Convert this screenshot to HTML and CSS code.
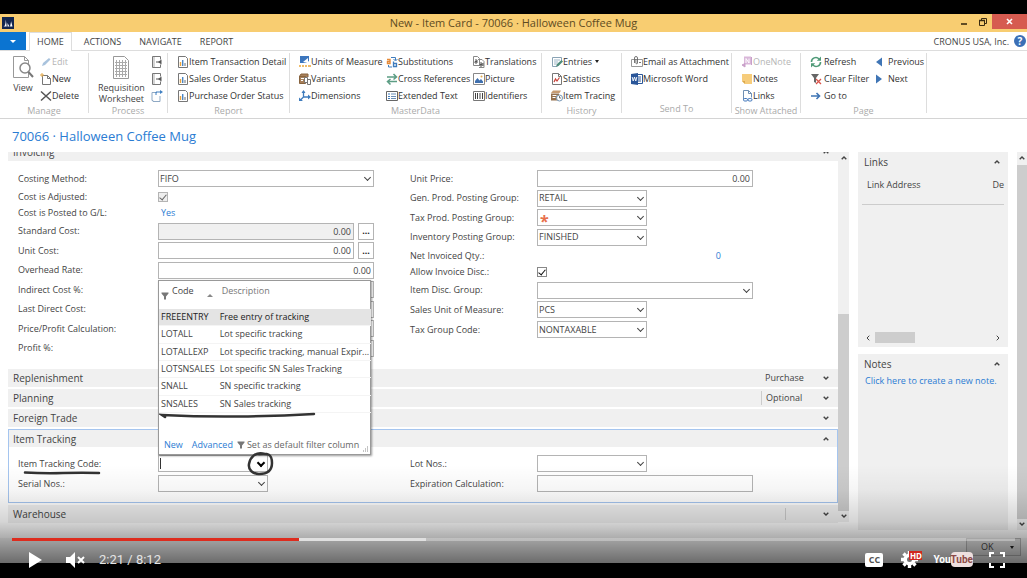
FILE: index.html
```html
<!DOCTYPE html>
<html lang="en">
<head>
  <meta charset="utf-8">
  <title>New - Item Card - 70066 · Halloween Coffee Mug</title>
  <link rel="stylesheet" href="styles.css">
</head>
<body>
  <svg class="sprite" aria-hidden="true">
    <symbol id="i-report" viewBox="0 0 12 12"><path d="M1.5.5h7l2 2v9h-9z" fill="#fff" stroke="#777"/><path d="M3.5 10V6" stroke="#e8a33d" stroke-width="1.4"/><path d="M5.7 10V4" stroke="#4a86c5" stroke-width="1.4"/><path d="M8 10V7" stroke="#999" stroke-width="1.4"/></symbol>
    <symbol id="i-door" viewBox="0 0 12 12"><path d="M9.500 3.500V.5h-8v11h8v-3" fill="#fff" stroke="#777"/><path d="M3 1v10" stroke="#aaa"/><path d="M10.500 3.500v5L7 6z" fill="#555"/><path d="M5 6h4" stroke="#555"/></symbol>
    <symbol id="i-up" viewBox="0 0 6 4"><path d="M.7 3.300L3 1l2.300 2.300" fill="none" stroke="#444" stroke-width="1.400"/></symbol>
    <symbol id="i-down" viewBox="0 0 6 4"><path d="M.7.7L3 3l2.300-2.300" fill="none" stroke="#444" stroke-width="1.400"/></symbol>
    <symbol id="i-funnel" viewBox="0 0 8 8"><path d="M.5.5h7v1L5 4.500v3H3v-3L.5 1.500z" fill="#777"/></symbol>
  </svg>

  <div class="app">
    <header class="titlebar">
      <svg class="app-logo" viewBox="0 0 12 12"><path d="M0 0h12v12H0z" fill="#12264f"/><path d="M1.500 9.500c1.500-.3 2-2 2.300-7l.9 7zM5.500 9.500V6l2 3.500zM8 9.500V5l1 4.500V4l1.500 5.500z" fill="#fff"/></svg>
      <span class="window-title">New - Item Card - 70066 · Halloween Coffee Mug</span>
      <div class="window-buttons">
        <button class="win-btn" aria-label="Minimize"><svg width="8" height="8" viewBox="0 0 8 8"><path d="M1 6h6" stroke="#3a2b10" stroke-width="1.600"/></svg></button>
        <button class="win-btn" aria-label="Restore"><svg width="8" height="8" viewBox="0 0 8 8"><path d="M.5 2.500h5v5h-5zM2.500 2V.5h5v5H6" fill="none" stroke="#3a2b10"/><path d="M0 2.500h6" stroke="#3a2b10" stroke-width="1.500"/></svg></button>
        <button class="win-btn win-close" aria-label="Close"><svg width="7" height="7" viewBox="0 0 7 7"><path d="M1 1l5 5M6 1L1 6" stroke="#fff" stroke-width="1.600"/></svg></button>
      </div>
    </header>

    <nav class="tabs">
      <button class="file-tab" aria-label="Application menu"></button>
      <button class="tab active">HOME</button>
      <button class="tab">ACTIONS</button>
      <button class="tab">NAVIGATE</button>
      <button class="tab">REPORT</button>
      <span class="company">CRONUS USA, Inc.</span>
      <button class="help" aria-label="Help">?</button>
    </nav>

    <div class="ribbon">
      <section class="group group-manage">
        <div class="group-body">
          <button class="big-btn">
            <svg width="22" height="24" viewBox="0 0 22 24"><path d="M1.500.5h11l4 4v17h-15z" fill="#fff" stroke="#999"/><path d="M12.500.5v4h4" fill="none" stroke="#999"/><circle cx="13" cy="12" r="5" fill="#fff" stroke="#888" stroke-width="1.500"/><path d="M16.500 16l4.500 5" stroke="#777" stroke-width="2"/></svg>
            View
          </button>
          <div class="stack">
            <button class="cmd muted"><svg viewBox="0 0 12 12"><path d="M2 10l1-3 6-5 1.500 1.500L5 9z" fill="#a9c3dd"/></svg>Edit</button>
            <button class="cmd"><svg viewBox="0 0 12 12"><path d="M2.500 2.500h5l3 3v6h-8z" fill="#fff" stroke="#777"/><path d="M7.500 2.500v3h3" fill="none" stroke="#777"/><path d="M0 2h4M2 0v4" stroke="#e3a94b"/></svg>New</button>
            <button class="cmd"><svg viewBox="0 0 12 12"><path d="M1 1.500l10 9M11 1.500l-10 9" stroke="#555" stroke-width="1.500"/></svg>Delete</button>
          </div>
        </div>
        <h3>Manage</h3>
      </section>

      <section class="group group-process">
        <div class="group-body">
          <button class="big-btn">
            <svg width="18" height="24" viewBox="0 0 18 24"><path d="M1.500.5h11l4 4v18h-15z" fill="#fff" stroke="#999"/><path d="M3 6.500h12M3 9.500h12M3 12.500h12M3 15.500h12M3 18.500h12M4.500 4v17M7.500 4v17M10.500 4v17M13.500 4v17" stroke="#aaa"/></svg>
            Requisition<br>Worksheet
          </button>
          <div class="stack">
            <button class="cmd" aria-label="Return orders"><svg><use href="#i-door"/></svg></button>
            <button class="cmd" aria-label="Copy item"><svg><use href="#i-door"/></svg></button>
            <button class="cmd" aria-label="Create item"><svg viewBox="0 0 12 12"><path d="M6 2.500H1v8h1v1h7V6" fill="#fff" stroke="#8fa9c4"/><path d="M5 5V2h5" fill="none" stroke="#3f7fc1"/><path d="M9 0l3 2-3 2z" fill="#3f7fc1"/></svg></button>
          </div>
        </div>
        <h3>Process</h3>
      </section>

      <section class="group group-report">
        <div class="group-body">
          <div class="stack">
            <button class="cmd"><svg><use href="#i-report"/></svg>Item Transaction Detail</button>
            <button class="cmd"><svg><use href="#i-report"/></svg>Sales Order Status</button>
            <button class="cmd"><svg><use href="#i-report"/></svg>Purchase Order Status</button>
          </div>
        </div>
        <h3>Report</h3>
      </section>

      <section class="group group-master">
        <div class="group-body">
          <div class="stack">
            <button class="cmd"><svg viewBox="0 0 12 12"><path d="M1 0h9v5L7 7H1z" fill="#3c76bd"/><path d="M4 6l5-4v5z" fill="#fff"/><path d="M0 9h12v2H0z" fill="#f0bd6a"/><path d="M2.500 9v2M5.500 9v2M8.500 9v2" stroke="#fff"/></svg>Units of Measure</button>
            <button class="cmd"><svg viewBox="0 0 12 12"><path d="M0 4l2-3h7v3M.5 3.500h6v7h-6z" fill="#a8805a" stroke="#86633f"/><path d="M2 5.500h3M2 7.500h2" stroke="#fff"/><path d="M5.500 4.500h3v5h-3zM8.500 6.500h3v5h-3z" fill="#fff" stroke="#777"/></svg>Variants</button>
            <button class="cmd"><svg viewBox="0 0 12 12"><path d="M4.500 1v6l-3 3M4.500 7h6" fill="none" stroke="#3f7cbd" stroke-width="1.300"/><path d="M2.500 3l2-3 2 3zM9 4.500l3 2.500-3 2.500zM0 7.500V11h4z" fill="#3f7cbd"/></svg>Dimensions</button>
          </div>
          <div class="stack">
            <button class="cmd"><svg viewBox="0 0 12 12"><path d="M1 3.500h3v4H1.500V5.500H4" fill="none" stroke="#e58b3a" stroke-width="1.400"/><path d="M7.500 5.500v5h3v-3h-3" fill="none" stroke="#3f7cbd" stroke-width="1.300"/><path d="M5 1.500h4.500V4M7.500 3l2 2 2-2M2.500 9v2H6" fill="none" stroke="#3f7cbd"/></svg>Substitutions</button>
            <button class="cmd"><svg viewBox="0 0 12 12"><path d="M1 4h9M7.500 1l3 3-3 2.500M11 8.500H2M4.500 6l-3 2.500 3 3" fill="none" stroke="#5c9d84" stroke-width="1.500"/></svg>Cross References</button>
            <button class="cmd"><svg viewBox="0 0 12 12"><path d="M.5 1.500h11v9H.5z" fill="#fff" stroke="#666"/><path d="M2 4h2M2 6.500h2M2 8.500h2" stroke="#3f7cbd"/><path d="M5 4h5M5 6.500h5M5 8.500h5" stroke="#6b8fb7"/></svg>Extended Text</button>
          </div>
          <div class="stack">
            <button class="cmd"><svg viewBox="0 0 12 12"><path d="M.5.5h4l2 2v7h-6zM5 3.500h4l2 2v6H6" fill="#fff" stroke="#888"/><path d="M2 4h2v3H2V5.500h2M7 7h2v3H7V8.500h2M10 7v3" fill="none" stroke="#555"/></svg>Translations</button>
            <button class="cmd"><svg viewBox="0 0 12 12"><path d="M.5.5h11v11H.5z" fill="#fff" stroke="#888"/><path d="M2 10V8l2.500-3 2 2.500L8 6l2 2.500V10z" fill="#3e6fae"/><circle cx="8.500" cy="3.500" r="1" fill="#e3a94b"/></svg>Picture</button>
            <button class="cmd"><svg viewBox="0 0 12 12"><path d="M.5 1.500h11v9H.5z" fill="#fff" stroke="#777"/><path d="M2.500 3v6M4.500 3v6M7 3v6M9.500 3v6" stroke="#444"/></svg>Identifiers</button>
          </div>
        </div>
        <h3>MasterData</h3>
      </section>

      <section class="group group-history">
        <div class="group-body">
          <div class="stack">
            <button class="cmd"><svg viewBox="0 0 12 12"><path d="M1.500 1.500h9v4M1.500 1.500v9h5" fill="none" stroke="#8aa3b5"/><path d="M3 4h6M3 6h4M3 8h3" stroke="#9fb7c8"/><path d="M5 10.500l1-2.500 4.500-4L12 5.500 7.500 10z" fill="#4f8c7c"/></svg>Entries <span class="caret-down"></span></button>
            <button class="cmd"><svg viewBox="0 0 12 12"><path d="M1.500.5h6l3 3v8h-9z" fill="#fff" stroke="#777"/><path d="M7.500.5v3h3" fill="none" stroke="#777"/><path d="M3 9l1.500-3L6 8l2.500-3.500" fill="none" stroke="#c8433a" stroke-width="1.200"/></svg>Statistics</button>
            <button class="cmd"><svg viewBox="0 0 12 12"><path d="M0 3l2-2.500h8L8.500 3z" fill="#c69b72"/><path d="M0 3.500h8v7H0z" fill="#94704e"/><path d="M1.500 5.500h4M1.500 7.500h3" stroke="#fff"/><circle cx="8.500" cy="8" r="3" fill="#fff" stroke="#7797b5"/><path d="M8.500 6v2h1.500" fill="none" stroke="#555" stroke-width=".8"/></svg>Item Tracing</button>
          </div>
        </div>
        <h3>History</h3>
      </section>

      <section class="group group-send">
        <div class="group-body">
          <div class="stack">
            <button class="cmd"><svg viewBox="0 0 12 12"><path d="M.5 3.500h11v7H.5z" fill="#fff" stroke="#999"/><path d="M3.500 7V2a1.500 1.500 0 013 0v5a.8.8 0 01-1.600 0V3M8 6.500h2" fill="none" stroke="#666" stroke-width=".9"/></svg>Email as Attachment</button>
            <button class="cmd"><svg viewBox="0 0 12 12"><path d="M6.500 1.500h5v9h-5z" fill="#fff" stroke="#2a5699"/><path d="M7 4h3M7 6h3M7 8h3" stroke="#2a5699"/><path d="M0 1l7-1v12l-7-1z" fill="#2a5699"/><path d="M1.200 4l1 4 1.300-4 1.300 4 1-4" fill="none" stroke="#fff" stroke-width=".9"/></svg>Microsoft Word</button>
          </div>
        </div>
        <h3>Send To</h3>
      </section>

      <section class="group group-attached">
        <div class="group-body">
          <div class="stack">
            <button class="cmd muted"><svg viewBox="0 0 12 12"><path d="M3 .5h7v8H3z" fill="#d9b7d9"/><path d="M5 7V2.500L8 7V2.500" fill="none" stroke="#fff"/><path d="M10.500 1v8M1 9l3-1.500V11z" stroke="#c9a0c9" fill="#c9a0c9"/></svg>OneNote</button>
            <button class="cmd"><svg viewBox="0 0 12 12"><path d="M1 1h10v10H4L1 8z" fill="#f6cc7b"/><path d="M1 8h3v3z" fill="#dca94c"/></svg>Notes</button>
            <button class="cmd"><svg viewBox="0 0 12 12"><path d="M2.500 9.500v-9h5l3 3v4" fill="#fff" stroke="#6f8fb3"/><path d="M7.500.5v3h3" fill="none" stroke="#6f8fb3"/><rect x="2.500" y="8.500" width="4" height="2.500" rx="1.200" fill="none" stroke="#3e74ba"/><rect x="7" y="8.500" width="4" height="2.500" rx="1.200" fill="none" stroke="#3e74ba"/></svg>Links</button>
          </div>
        </div>
        <h3>Show Attached</h3>
      </section>

      <section class="group group-page">
        <div class="group-body">
          <div class="stack">
            <button class="cmd"><svg viewBox="0 0 12 12"><path d="M1.500 6A4.300 4.300 0 019 3M10.500 6A4.300 4.300 0 013 9" fill="none" stroke="#4f9a78" stroke-width="1.600"/><path d="M11 .5v4.200H6.800zM1 11.500V7.300h4.200z" fill="#4f9a78"/></svg>Refresh</button>
            <button class="cmd"><svg viewBox="0 0 12 12"><path d="M1 1h8L6 5v5L4 9V5z" fill="#666"/><path d="M6 6l5 5M11 6l-5 5" stroke="#d9534a" stroke-width="1.300"/></svg>Clear Filter</button>
            <button class="cmd"><svg viewBox="0 0 12 12"><path d="M1 6h8M6.500 3l3 3-3 3" fill="none" stroke="#3f75b5" stroke-width="1.600"/></svg>Go to</button>
          </div>
          <div class="stack">
            <button class="cmd"><svg viewBox="0 0 12 12"><path d="M8 1.500v9L2 6z" fill="#3f75b5"/></svg>Previous</button>
            <button class="cmd"><svg viewBox="0 0 12 12"><path d="M2 1.500v9L8 6z" fill="#3f75b5"/></svg>Next</button>
          </div>
        </div>
        <h3>Page</h3>
      </section>
    </div>

    <h1>70066 · Halloween Coffee Mug</h1>

    <main class="workspace">
      <div class="card">
        <section class="fasttab first">
          <button class="fasttab-head">Invoicing<svg class="chevron"><use href="#i-up"/></svg></button>
          <div class="fields invoicing">
            <div class="column column-left">
              <div class="row"><label for="costing">Costing Method:</label><div class="picker wide"><select id="costing"><option>FIFO</option></select></div></div>
              <div class="row plain"><label for="adjusted">Cost is Adjusted:</label><input type="checkbox" id="adjusted" checked disabled></div>
              <div class="row plain"><span class="label">Cost is Posted to G/L:</span><a href="#" class="value-link">Yes</a></div>
              <div class="row"><label for="standard">Standard Cost:</label><div class="assist"><input type="text" id="standard" class="number" value="0.00" readonly><button class="dots">...</button></div></div>
              <div class="row"><label for="unitcost">Unit Cost:</label><div class="assist"><input type="text" id="unitcost" class="number" value="0.00"><button class="dots">...</button></div></div>
              <div class="row"><label for="overhead">Overhead Rate:</label><input type="text" id="overhead" class="number wide" value="0.00"></div>
              <div class="row"><label for="indirect">Indirect Cost %:</label><input type="text" id="indirect" class="wide"></div>
              <div class="row"><label for="lastdirect">Last Direct Cost:</label><input type="text" id="lastdirect" class="wide"></div>
              <div class="row"><label for="profitcalc">Price/Profit Calculation:</label><input type="text" id="profitcalc" class="wide"></div>
              <div class="row"><label for="profit">Profit %:</label><input type="text" id="profit" class="wide"></div>
            </div>
            <div class="column column-right">
              <div class="row"><label for="price">Unit Price:</label><input type="text" id="price" class="number wide" value="0.00"></div>
              <div class="row"><label for="gen">Gen. Prod. Posting Group:</label><div class="picker"><select id="gen"><option>RETAIL</option></select></div></div>
              <div class="row"><label for="tax">Tax Prod. Posting Group:</label><div class="picker required"><select id="tax"><option></option></select></div></div>
              <div class="row"><label for="inv">Inventory Posting Group:</label><div class="picker"><select id="inv"><option>FINISHED</option></select></div></div>
              <div class="row plain"><span class="label">Net Invoiced Qty.:</span><a href="#" class="value-link qty">0</a></div>
              <div class="row plain"><label for="allow">Allow Invoice Disc.:</label><input type="checkbox" id="allow" checked></div>
              <div class="row"><label for="disc">Item Disc. Group:</label><div class="picker wide"><select id="disc"><option></option></select></div></div>
              <div class="row"><label for="uom">Sales Unit of Measure:</label><div class="picker"><select id="uom"><option>PCS</option></select></div></div>
              <div class="row"><label for="taxgroup">Tax Group Code:</label><div class="picker"><select id="taxgroup"><option>NONTAXABLE</option></select></div></div>
            </div>
          </div>
        </section>

        <button class="fasttab-head">Replenishment<span class="summary">Purchase</span><svg class="chevron"><use href="#i-down"/></svg></button>
        <button class="fasttab-head">Planning<span class="summary divided">Optional</span><svg class="chevron"><use href="#i-down"/></svg></button>
        <button class="fasttab-head">Foreign Trade<svg class="chevron"><use href="#i-down"/></svg></button>

        <section class="fasttab current">
          <button class="fasttab-head">Item Tracking<svg class="chevron"><use href="#i-up"/></svg></button>
          <div class="fields tracking">
            <div class="column">
              <div class="row">
                <label for="trackcode">Item Tracking Code:</label>
                <svg class="ink ink-label" viewBox="0 0 78 6"><path d="M2 3.500q18 1 38 .5T76 4" /></svg>
                <div class="picker open">
                  <input type="text" id="trackcode">
                  <span class="text-caret"></span>
                  <svg class="ink ink-circle" viewBox="0 0 30 28"><path d="M19 4C9 1 4 8 3 14s4 10 10 10 13-2 13-11S22 3 13 4" /></svg>
                  <div class="lookup">
                    <table>
                      <thead>
                        <tr>
                          <th><svg class="funnel"><use href="#i-funnel"/></svg>Code<span class="sort"></span></th>
                          <th class="light">Description</th>
                        </tr>
                      </thead>
                      <tbody>
                        <tr class="selected"><td>FREEENTRY</td><td>Free entry of tracking</td></tr>
                        <tr><td>LOTALL</td><td>Lot specific tracking</td></tr>
                        <tr><td>LOTALLEXP</td><td>Lot specific tracking, manual Expir...</td></tr>
                        <tr><td>LOTSNSALES</td><td>Lot specific SN Sales Tracking</td></tr>
                        <tr><td>SNALL</td><td>SN specific tracking</td></tr>
                        <tr><td>SNSALES</td><td>SN Sales tracking</td></tr>
                      </tbody>
                    </table>
                    <svg class="ink ink-row" viewBox="0 0 158 8"><path d="M6 6L3 4q40 2 78 1.500T155 3" /></svg>
                    <footer>
                      <a href="#">New</a>
                      <a href="#">Advanced</a>
                      <button class="default-filter"><svg class="funnel"><use href="#i-funnel"/></svg>Set as default filter column</button>
                      <svg class="grip" viewBox="0 0 7 7"><path d="M5 1h1M3 3h1M5 3h1M1 5h1M3 5h1M5 5h1" stroke="#888"/></svg>
                    </footer>
                  </div>
                </div>
              </div>
              <div class="row"><label for="serial">Serial Nos.:</label><div class="picker"><select id="serial"><option></option></select></div></div>
            </div>
            <div class="column column-right">
              <div class="row"><label for="lot">Lot Nos.:</label><div class="picker"><select id="lot"><option></option></select></div></div>
              <div class="row"><label for="expiration">Expiration Calculation:</label><input type="text" id="expiration" class="wide"></div>
            </div>
          </div>
        </section>

        <button class="fasttab-head">Warehouse<span class="summary divided empty"></span><svg class="chevron"><use href="#i-down"/></svg></button>
      </div>

      <div class="scrollbar card-scroll">
        <svg><use href="#i-up"/></svg>
        <div class="track"><div class="thumb"></div></div>
        <svg><use href="#i-down"/></svg>
      </div>

      <aside class="factbox">
        <section class="links-box">
          <h2>Links<svg class="chevron"><use href="#i-up"/></svg></h2>
          <div class="links-head"><span>Link Address</span><span>De</span></div>
          <div class="hscroll">
            <svg viewBox="0 0 4 6"><path d="M3.300.7L1 3l2.300 2.300" /></svg>
            <div class="hthumb"></div>
            <svg viewBox="0 0 4 6"><path d="M.7.7L3 3 .7 5.300" /></svg>
          </div>
        </section>
        <section class="notes-box">
          <h2>Notes<svg class="chevron"><use href="#i-up"/></svg></h2>
          <a href="#">Click here to create a new note.</a>
        </section>
      </aside>

      <div class="scrollbar page-scroll">
        <svg><use href="#i-up"/></svg>
        <div class="track"><div class="thumb"></div></div>
        <svg><use href="#i-down"/></svg>
      </div>
    </main>

    <div class="actionbar">
      <button class="ok">OK<span class="caret-down"></span></button>
    </div>
  </div>

  <div class="player">
    <input type="range" class="seek" aria-label="Seek" min="0" max="492" value="141">
    <div class="controls">
      <button class="play" aria-label="Play"><svg width="13" height="16" viewBox="0 0 13 16"><path d="M0 0l13 8-13 8z" fill="#fff"/></svg></button>
      <button class="mute" aria-label="Unmute"><svg width="19" height="16" viewBox="0 0 19 16"><path d="M0 5h4l5-5v16l-5-5H0z" fill="#fff"/><path d="M12 5l6 6M18 5l-6 6" stroke="#fff" stroke-width="2"/></svg></button>
      <span class="time">2:21 / 8:12</span>
      <button class="cc" aria-label="Captions">CC</button>
      <button class="settings" aria-label="Settings">
        <svg width="17" height="17" viewBox="0 0 17 17"><circle cx="8.500" cy="8.500" r="4.300" fill="none" stroke="#fff" stroke-width="3.600"/><path d="M8.500 0v3M8.500 14v3M0 8.500h3M14 8.500h3M2.500 2.500l2 2M12.500 12.500l2 2M2.500 14.500l2-2M12.500 4.500l2-2" stroke="#fff" stroke-width="3.400"/></svg>
        <span class="hd">HD</span>
      </button>
      <a href="#" class="youtube">You<span>Tube</span></a>
      <button class="fullscreen" aria-label="Full screen"><svg width="16" height="16" viewBox="0 0 16 16"><path d="M1 5V1h4M11 1h4v4M15 11v4h-4M5 15H1v-4" fill="none" stroke="#fff" stroke-width="2"/></svg></button>
    </div>
  </div>
</body>
</html>
```
FILE: styles.css
```css
:root {
  --blue: #2b7cd3;
  --text: #444;
  --muted: #aaa;
  --panel: #f0f0f0;
  --thumb: #cdcdcd;
  --border: #b4b4b4;
}

* {
  box-sizing: border-box;
}

body {
  position: relative;
  display: flex;
  flex-direction: column;
  min-height: 100vh;
  margin: 0;
  padding: 14px 0 15px;
  background: #000;
  color: var(--text);
  font: 9px/14px "Open Sans", "Noto Sans", sans-serif;
}

button, input, select {
  margin: 0;
  padding: 0;
  border: none;
  border-radius: 0;
  background: none;
  color: inherit;
  font: inherit;
}

a {
  color: var(--blue);
  text-decoration: none;
}

h1, h2, h3 {
  margin: 0;
  font-weight: 400;
}

svg {
  display: block;
  flex: none;
}

.sprite {
  position: absolute;
  width: 0;
  height: 0;
}

.app {
  display: flex;
  flex: 1;
  flex-direction: column;
  background: #fff;
}

/* Title bar */
.titlebar {
  display: flex;
  align-items: center;
  height: 18px;
  padding-left: 2px;
  background: #f8cd71;
}

.app-logo {
  width: 12px;
  height: 12px;
}

.window-title {
  flex: 1;
  padding-left: 59px;
  color: #5e4b22;
  font-size: 11px;
  text-align: center;
}

.window-buttons {
  display: flex;
  align-self: flex-start;
}

.win-btn {
  display: flex;
  align-items: center;
  justify-content: center;
  width: 19px;
  height: 15px;
}

.win-close {
  width: 35px;
  background: #d65b50;
}

/* Ribbon tabs */
.tabs {
  display: flex;
  height: 19px;
  border-bottom: 1px solid #ddd;
}

.file-tab {
  width: 26px;
  background: #0b74d1;
}

.file-tab::after,
.caret-down {
  display: inline-block;
  border: 3px solid transparent;
  border-top-color: #fff;
  border-bottom: none;
  content: "";
  vertical-align: middle;
}

.caret-down {
  margin-left: 3px;
  border-width: 2px;
  border-top: 3px solid #222;
}

.tab {
  height: 19px;
  padding: 0 9px;
}

.tab.active {
  margin: 0 3px;
  padding: 0 7px;
  border: 1px solid #ddd;
  border-bottom: none;
  background: #fff;
}

.company {
  margin: 3px 5px 0 auto;
}

.help {
  width: 12px;
  height: 12px;
  margin: 3px 1px 0 0;
  border-radius: 50%;
  background: #3b6fb6;
  color: #fff;
  font-size: 10px;
  font-weight: 700;
  line-height: 12px;
}

/* Ribbon */
.ribbon {
  display: flex;
  height: 68px;
  padding-top: 2px;
  border-bottom: 1px solid #d4d4d4;
}

.group {
  display: flex;
  flex: none;
  flex-direction: column;
  margin-bottom: 5px;
  border-right: 1px solid #ddd;
}

.group-body {
  display: flex;
  flex: 1;
}

.group h3 {
  height: 11px;
  color: var(--muted);
  font-size: 9px;
  line-height: 14px;
  text-align: center;
  white-space: nowrap;
}

.group-manage { width: 89px; }
.group-process { width: 79px; }
.group-report { width: 122px; }
.group-master { width: 252px; }
.group-history { width: 80px; }
.group-send { width: 110px; }
.group-attached { width: 69px; }
.group-page { width: 126px; }

.group-body {
  padding-left: 9px;
}

.group-manage .group-body {
  padding-left: 12px;
}

.stack {
  flex: none;
}

.group-master .stack {
  width: 87px;
}

.group-page .stack {
  width: 64px;
}

.big-btn {
  display: flex;
  flex-direction: column;
  align-items: center;
  padding-top: 3px;
  line-height: 11px;
}

.big-btn svg {
  margin-bottom: 2px;
}

.group-manage .stack,
.group-process .stack {
  margin-left: 6px;
}

.cmd {
  display: flex;
  align-items: center;
  height: 17px;
  color: #333;
  white-space: nowrap;
}

.cmd svg {
  width: 12px;
  height: 12px;
}

.group-page .cmd svg {
  margin-right: 2px;
}

.cmd.muted {
  color: #b5b5b5;
}

h1 {
  height: 33px;
  padding-left: 12px;
  color: var(--blue);
  font-size: 13px;
  line-height: 34px;
}

/* Workspace */
.workspace {
  display: flex;
  flex: 1;
  padding: 0 0 8px 8px;
}

.card {
  flex: 1;
  overflow: hidden;
}

.fasttab-head {
  display: flex;
  align-items: center;
  width: 100%;
  height: 18px;
  margin-bottom: 2px;
  padding: 0 9px 0 5px;
  background: var(--panel);
  font-size: 10px;
}

.first .fasttab-head {
  margin-top: -9px;
}

.chevron {
  width: 6px;
  height: 4px;
  margin-left: auto;
}

.summary {
  width: 48px;
  margin-left: auto;
  padding-left: 4px;
  font-size: 9px;
  text-align: left;
}

.summary + .chevron {
  margin-left: 14px;
}

.divided {
  border-left: 1px solid #ccc;
}

.summary.empty {
  width: 24px;
  height: 12px;
}

.fields {
  display: grid;
  grid-template-columns: 392px 1fr;
  padding-left: 10px;
}

.invoicing {
  min-height: 206px;
  padding-top: 7px;
  align-items: start;
}

.column {
  display: flex;
  flex-direction: column;
  justify-content: space-between;
}

.invoicing .column-left {
  min-height: 187px;
}

.invoicing .column-right {
  min-height: 168px;
}

.row {
  position: relative;
  display: grid;
  grid-template-columns: 140px 1fr;
  align-items: center;
  height: 17px;
}

.row.plain {
  height: 14px;
}

.column-right .row {
  grid-template-columns: 127px 1fr;
}

input[type="text"],
select {
  width: 100%;
  height: 17px;
  padding: 0 2px;
  border: 1px solid var(--border);
  background: #fff;
  appearance: none;
}

select {
  padding: 0 1px;
}

input[type="text"]:read-only {
  background: var(--panel);
}

input[type="text"].wide,
.picker.wide {
  width: 216px;
}

.number {
  text-align: right;
}

.picker {
  position: relative;
  width: 110px;
}

.picker::after {
  position: absolute;
  top: 5px;
  right: 4px;
  width: 4px;
  height: 4px;
  border: solid #444;
  border-width: 0 1px 1px 0;
  content: "";
  pointer-events: none;
  transform: rotate(45deg);
}

.picker.open::after {
  border-color: #000;
  border-width: 0 2px 2px 0;
}

.picker.required::before {
  position: absolute;
  top: 3px;
  left: 3px;
  color: #e8704c;
  content: "*";
  font-size: 16px;
  font-weight: 700;
  line-height: 18px;
}

input[type="checkbox"] {
  display: grid;
  place-items: center;
  width: 10px;
  height: 10px;
  border: 1px solid #888;
  background: #fff;
  appearance: none;
}

input[type="checkbox"]::before {
  width: 3px;
  height: 6px;
  margin-bottom: 1px;
  border: solid #111;
  border-width: 0 1px 1px 0;
  content: "";
  transform: rotate(40deg);
}

input[type="checkbox"]:disabled {
  border-color: var(--border);
  background: #eee;
}

input[type="checkbox"]:disabled::before {
  border-color: #666;
}

.value-link {
  padding-left: 3px;
}

.value-link.qty {
  width: 184px;
  text-align: right;
}

.assist {
  display: flex;
  gap: 4px;
  width: 216px;
}

.dots {
  flex: none;
  width: 16px;
  height: 17px;
  border: 1px solid var(--border);
  color: #222;
  font-weight: 700;
}

/* Focused tab and its lookup */
.current {
  margin-bottom: 2px;
  border: 1px solid #a5c5ef;
}

.current .fasttab-head {
  height: 17px;
  margin: 0;
  padding: 0 8px 0 4px;
}

.tracking {
  padding: 8px 0 10px 9px;
}

.tracking .column {
  gap: 3px;
}

.text-caret {
  position: absolute;
  top: 3px;
  left: 2px;
  width: 1px;
  height: 11px;
  background: #333;
}

.lookup {
  position: absolute;
  bottom: 100%;
  left: 0;
  display: flex;
  flex-direction: column;
  width: 213px;
  height: 175px;
  border: 1px solid #999;
  background: #fff;
  box-shadow: 1px 1px 2px rgba(0, 0, 0, 0.4);
}

.lookup table {
  width: 100%;
  height: 132px;
  border-spacing: 0;
  white-space: nowrap;
}

.lookup th {
  height: 28px;
  padding: 0 2px 9px;
  font-weight: 400;
  text-align: left;
}

.lookup th .funnel {
  display: inline-block;
  margin: 0 3px -6px 0;
}

.lookup th.light {
  padding-left: 5px;
  color: #777;
}

.sort {
  display: inline-block;
  margin: 0 0 -3px 13px;
  border: 3px solid transparent;
  border-top: none;
  border-bottom-color: #888;
}

.lookup td {
  padding: 0 2px;
  line-height: 16px;
  border-bottom: 1px solid #f4f4f4;
}

.lookup td:first-child {
  width: 60px;
}

.lookup td:last-child {
  padding-left: 3px;
}

.selected td {
  background: #e4e4e4;
  color: #222;
}

.funnel {
  width: 8px;
  height: 8px;
}

.lookup footer {
  display: flex;
  align-items: center;
  gap: 9px;
  margin-top: auto;
  padding: 0 0 2px 5px;
}

.default-filter {
  display: flex;
  align-items: center;
  gap: 2px;
  margin-left: -5px;
  color: #666;
  white-space: nowrap;
}

.grip {
  position: absolute;
  right: 1px;
  bottom: 1px;
  width: 7px;
  height: 7px;
}

/* Pen marks drawn over the form */
.ink {
  position: absolute;
  z-index: 2;
  fill: none;
  stroke: #333;
  stroke-linecap: round;
  stroke-width: 2.5;
  pointer-events: none;
}

.ink-label {
  top: 14px;
  left: 5px;
  width: 78px;
  height: 6px;
}

.ink-circle {
  top: -5px;
  right: -8px;
  width: 30px;
  height: 28px;
}

.ink-row {
  top: 130px;
  left: 0;
  width: 158px;
  height: 8px;
}

/* Scrollbars */
.scrollbar {
  display: flex;
  flex-direction: column;
  align-items: center;
  width: 11px;
  padding: 4px 0;
  background: var(--panel);
}

.scrollbar svg {
  width: 6px;
  height: 4px;
}

.track {
  display: flex;
  flex: 1;
  flex-direction: column;
  justify-content: flex-end;
  width: 100%;
  margin: 5px 0 3px;
}

.thumb {
  height: 100%;
  background: var(--thumb);
}

.card-scroll {
  margin: 0 9px 8px 0;
}

.card-scroll .thumb {
  height: 57%;
}

.page-scroll {
  width: 10px;
}

/* Fact boxes */
.factbox {
  display: flex;
  flex-direction: column;
  gap: 7px;
  width: 150px;
  margin-right: 9px;
}

.factbox section {
  background: var(--panel);
}

.factbox h2 {
  display: flex;
  align-items: center;
  height: 20px;
  padding: 0 8px 0 6px;
  font-size: 10px;
}

.links-box {
  display: flex;
  flex: 10;
  flex-direction: column;
}

.notes-box {
  flex: 9;
}

.notes-box a {
  padding-left: 7px;
}

.links-head {
  display: flex;
  justify-content: space-between;
  height: 33px;
  margin: 0 4px;
  padding: 6px 0 0 5px;
  border-bottom: 1px solid #ccc;
}

.hscroll {
  display: flex;
  align-items: center;
  margin-top: auto;
  padding: 0 8px 4px;
}

.hscroll svg {
  width: 4px;
  height: 6px;
  fill: none;
  stroke: #444;
}

.hthumb {
  width: 40px;
  height: 11px;
  margin: 0 auto 0 5px;
  background: var(--thumb);
}

/* Bottom bar */
.actionbar {
  display: flex;
  justify-content: flex-end;
  height: 25px;
  padding-right: 6px;
  background: #f4f4f4;
}

.ok {
  display: flex;
  align-items: center;
  justify-content: space-between;
  width: 55px;
  height: 18px;
  padding: 0 6px 0 14px;
  border: 1px solid #bbb;
  background: #e8e8e8;
}

/* Video player */
.player {
  position: absolute;
  right: 0;
  bottom: 0;
  left: 0;
  z-index: 5;
  padding-top: 83px;
  background: linear-gradient(transparent 10px, rgba(0, 0, 0, 0.04) 35px, rgba(0, 0, 0, 0.17) 67px, rgba(0, 0, 0, 0.34) 85px, rgba(0, 0, 0, 0.56) 108px);
}

.seek {
  display: block;
  width: calc(100% - 24px);
  height: 3px;
  margin: 0 12px;
  background: linear-gradient(90deg, #dd2c1e 0 28.6%, #e0e0e0 28.6% 41.3%, rgba(255, 255, 255, 0.3) 41.3%);
  appearance: none;
}

.seek::-webkit-slider-thumb {
  width: 1px;
  height: 3px;
  appearance: none;
}

.controls {
  display: flex;
  align-items: center;
  height: 37px;
  padding: 0 22px 0 29px;
  color: #fff;
}

.mute {
  margin-left: 24px;
}

.time {
  margin-left: 14px;
  color: #e4e4e4;
  font-family: Roboto, sans-serif;
  font-size: 13px;
}

.cc {
  width: 18px;
  height: 14px;
  margin-left: auto;
  border-radius: 2px;
  background: #fff;
  color: #555;
  font-weight: 700;
  line-height: 14px;
}

.settings {
  position: relative;
  margin-left: 18px;
}

.hd {
  position: absolute;
  top: 0;
  left: 8px;
  width: 13px;
  background: #d0271d;
  font-size: 8px;
  font-weight: 700;
  line-height: 9px;
}

.youtube {
  display: flex;
  align-items: center;
  margin: 0 16px 0 15px;
  color: #fff;
  font: bold 10px/15px Roboto, sans-serif;
}

.youtube span {
  border-radius: 4px;
  background: #eedfde;
  color: #8d4a47;
}
```
